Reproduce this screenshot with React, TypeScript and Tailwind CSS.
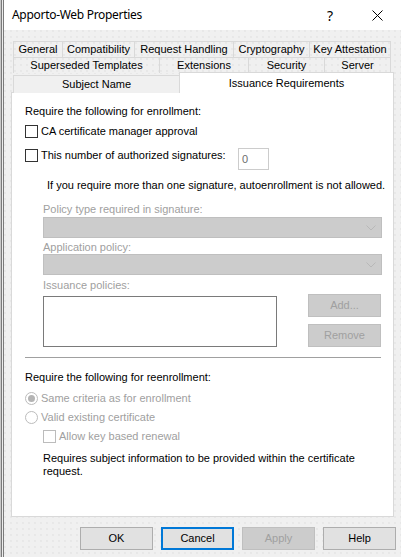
import type { ReactNode } from "react";

const dots =
  "bg-[radial-gradient(circle_at_1px_1px,#e3e3e3_0.6px,transparent_0.9px)] bg-[length:6px_6px]";

function Tab({ label, w, last }: { label: string; w: string; last?: boolean }) {
  return (
    <div
      className={`${w} h-full flex items-center justify-center border-t border-l border-[#d9d9d9] ${
        last ? "border-r" : ""
      } ${dots} bg-[#f0f0f0]`}
    >
      {label}
    </div>
  );
}

function CheckBox({ disabled }: { disabled?: boolean }) {
  return (
    <span
      className={`w-[13px] h-[13px] shrink-0 bg-white border ${
        disabled ? "border-[#bcbcbc]" : "border-[#333333]"
      }`}
    />
  );
}

function Radio({ checked }: { checked?: boolean }) {
  return (
    <span className="w-[13px] h-[13px] shrink-0 rounded-full border border-[#bcbcbc] bg-white flex items-center justify-center">
      {checked && <span className="w-[7px] h-[7px] rounded-full bg-[#b4b4b4]" />}
    </span>
  );
}

function Combo() {
  return (
    <div className="ml-[32px] w-[339px] h-[21px] bg-[#cccccc] border border-[#bfbfbf] flex items-center justify-end pr-[5px]">
      <svg width="10" height="6" viewBox="0 0 10 6">
        <path d="M0.5 0.5 L5 5 L9.5 0.5" fill="none" stroke="#b8b8b8" strokeWidth="1" />
      </svg>
    </div>
  );
}

function Btn({
  children,
  variant = "normal",
  w = "w-[73px]",
}: {
  children: ReactNode;
  variant?: "normal" | "focus" | "disabled";
  w?: string;
}) {
  const cls =
    variant === "focus"
      ? "bg-[#e1e1e1] border-2 border-[#0078d7] text-black"
      : variant === "disabled"
      ? "bg-[#cccccc] border border-[#bfbfbf] text-[#a0a0a0]"
      : "bg-[#e1e1e1] border border-[#adadad] text-black";
  return (
    <div className={`${w} h-[23px] flex items-center justify-center ${cls}`}>{children}</div>
  );
}

export default function App() {
  return (
    <div
      className="w-[401px] h-[557px] flex bg-[#f0f0f0] text-black overflow-hidden"
      style={{ fontFamily: '"Liberation Sans", Arial, sans-serif', fontSize: "11px" }}
    >
      {/* window frame on the left */}
      <div className="flex h-full shrink-0">
        <div className="w-px bg-[#c8c8c8]" />
        <div className="w-px bg-[#7a7a7a]" />
        <div className="w-px bg-[#ececec]" />
        <div className="w-px bg-[#7a7a7a]" />
      </div>

      <div className="flex-1 flex flex-col">
        {/* title bar */}
        <div className="h-[30px] bg-white flex items-center shrink-0">
          <span
            className="ml-[8px] text-[12px] tracking-[-0.3px] text-black"
            style={{ fontFamily: '"Noto Sans", "Open Sans", sans-serif' }}
          >
            Apporto-Web Properties
          </span>
          <span
            className="ml-auto mr-[39px] text-[14px]"
            style={{ fontFamily: '"Noto Sans", sans-serif' }}
          >
            ?
          </span>
          <svg className="mr-[19px]" width="11" height="11" viewBox="0 0 11 11">
            <path d="M0.5 0.5 L10.5 10.5 M10.5 0.5 L0.5 10.5" stroke="#000" strokeWidth="1" />
          </svg>
        </div>

        <div className={`flex-1 flex flex-col pl-[7px] pr-[8px] ${dots}`}>
          {/* tabs */}
          <div className="mt-[11px] flex flex-col">
            <div className="h-[16px] flex px-[2px]">
              <Tab label="General" w="w-[49px]" />
              <Tab label="Compatibility" w="w-[72px]" />
              <Tab label="Request Handling" w="w-[99px]" />
              <Tab label="Cryptography" w="w-[76px]" />
              <Tab label="Key Attestation" w="w-[82px]" last />
            </div>
            <div className="h-[16px] flex px-[2px]">
              <Tab label="Superseded Templates" w="w-[146px]" />
              <Tab label="Extensions" w="w-[89px]" />
              <Tab label="Security" w="w-[76px]" />
              <Tab label="Server" w="w-[67px]" last />
            </div>
            <div className="h-[20px] flex items-end relative z-10 -mb-px">
              <div className="ml-[2px] w-[166px] h-[18px] flex items-center justify-center border-t border-l border-[#d9d9d9] bg-[#f0f0f0]">
                Subject Name
              </div>
              <div className="w-[215px] h-[21px] -mt-[1px] self-start flex items-start justify-center pt-[2px] bg-white border-t border-l border-r border-[#d9d9d9]">
                Issuance Requirements
              </div>
            </div>
          </div>

          {/* panel */}
          <div className="h-[425px] bg-white border border-[#d9d9d9] flex flex-col pl-[13px]">
            <div className="mt-[11px] h-[14px] leading-[14px]">Require the following for enrollment:</div>
            <div className="mt-[7px] flex items-center gap-[3px] h-[13px]">
              <CheckBox />
              <span>CA certificate manager approval</span>
            </div>
            <div className="mt-[10px] flex items-start h-[22px]">
              <div className="mt-[1px] flex items-center gap-[3px] h-[13px]">
                <CheckBox />
                <span>This number of authorized signatures:</span>
              </div>
              <div className="ml-auto mr-[124px] w-[31px] h-[22px] border border-[#cccccc] flex items-center pl-[3px] text-[#6d6d6d]">
                0
              </div>
            </div>
            <div className="mt-[8px] ml-[22px] h-[14px] leading-[14px] whitespace-nowrap">
              If you require more than one signature, autoenrollment is not allowed.
            </div>

            <div className="mt-[10px] ml-[18px] h-[14px] leading-[14px] text-[#a0a0a0]">
              Policy type required in signature:
            </div>
            <div className="mt-[1px] -ml-[14px]">
              <Combo />
            </div>
            <div className="mt-[2px] ml-[18px] h-[14px] leading-[14px] text-[#a0a0a0]">
              Application policy:
            </div>
            <div className="-ml-[14px]">
              <Combo />
            </div>
            <div className="mt-[3px] ml-[18px] h-[14px] leading-[14px] text-[#a0a0a0]">
              Issuance policies:
            </div>
            <div className="mt-[2px] ml-[18px] flex items-start">
              <div className="mt-[2px] w-[234px] h-[51px] border border-[#7a7a7a] bg-white" />
              <div className="ml-[31px] flex flex-col gap-[7px]">
                <Btn variant="disabled">Add...</Btn>
                <Btn variant="disabled">Remove</Btn>
              </div>
            </div>

            <div className="mt-[10px] mr-[12px] h-px bg-[#a0a0a0]" />

            <div className="mt-[12px] h-[14px] leading-[14px]">Require the following for reenrollment:</div>
            <div className="mt-[8px] flex items-center gap-[3px] h-[13px] text-[#a0a0a0]">
              <Radio checked />
              <span>Same criteria as for enrollment</span>
            </div>
            <div className="mt-[6px] flex items-center gap-[3px] h-[13px] text-[#a0a0a0]">
              <Radio />
              <span>Valid existing certificate</span>
            </div>
            <div className="mt-[6px] ml-[18px] flex items-center gap-[3px] h-[13px] text-[#a0a0a0]">
              <CheckBox disabled />
              <span>Allow key based renewal</span>
            </div>
            <div className="mt-[9px] ml-[18px] leading-[13px] whitespace-nowrap">
              Requires subject information to be provided within the certificate
              <br />
              request.
            </div>
          </div>

          {/* dialog buttons */}
          <div className="mt-[10px] flex justify-end gap-[8px] -mr-[2px]">
            <Btn>OK</Btn>
            <Btn variant="focus">Cancel</Btn>
            <Btn variant="disabled">Apply</Btn>
            <Btn>Help</Btn>
          </div>
        </div>
      </div>
    </div>
  );
}
